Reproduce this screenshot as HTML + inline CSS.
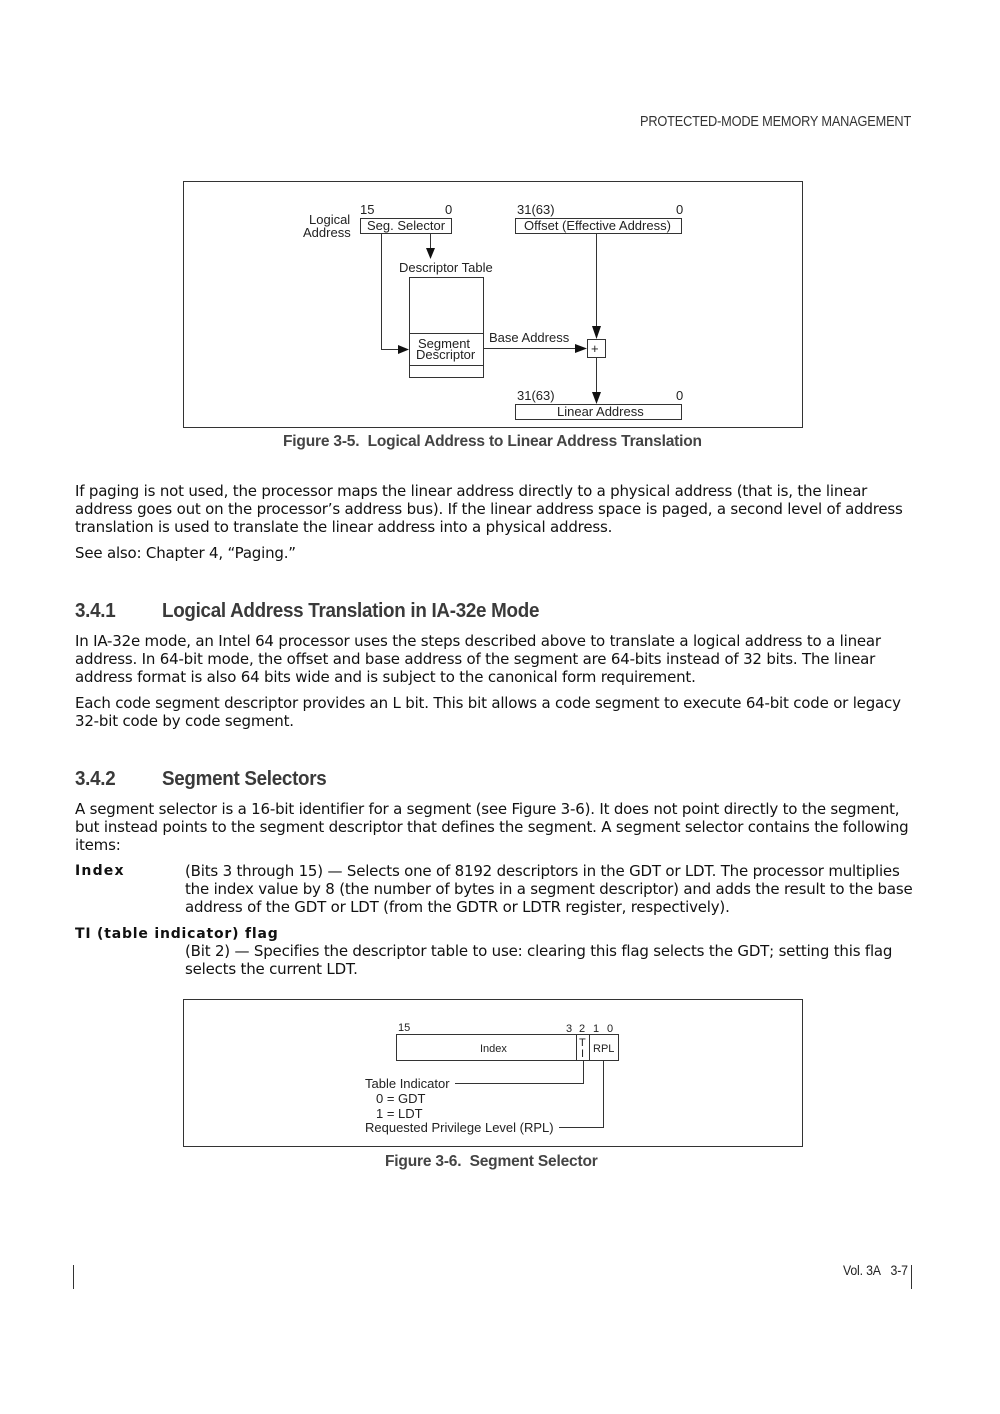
<!DOCTYPE html>
<html><head><meta charset="utf-8"><style>
html,body{margin:0;padding:0;background:#fff}
body{width:1000px;height:1414px;position:relative;overflow:hidden;color:#111}
.t{position:absolute;left:75px;font-family:"DejaVu Sans","Liberation Sans",sans-serif;font-size:15px;line-height:18px;white-space:nowrap;letter-spacing:-0.2px}
.h{position:absolute;font-family:"Liberation Sans",sans-serif;font-size:20px;font-weight:bold;color:#3a3a3a;white-space:nowrap;letter-spacing:-0.3px;transform:scaleX(0.94);transform-origin:0 0}
.cap{position:absolute;font-family:"Liberation Sans",sans-serif;font-size:16px;font-weight:bold;color:#444;white-space:nowrap;letter-spacing:-0.2px;transform:scaleX(0.97);transform-origin:0 0}
.b{font-weight:bold;letter-spacing:1.2px}
svg{position:absolute;left:0;top:0}
svg text{font-family:"Liberation Sans",sans-serif;fill:#222}
</style></head><body>
<div class="cap" style="left:640px;top:113px;font-size:15px;font-weight:normal;color:#333;transform:scaleX(0.85)">PROTECTED-MODE MEMORY MANAGEMENT</div>

<svg width="1000" height="1414" viewBox="0 0 1000 1414">
<g fill="none" stroke="#333" stroke-width="1">
<rect x="183.5" y="181.5" width="619" height="246"/>
<rect x="360.5" y="218.5" width="91" height="15"/>
<rect x="515.5" y="218.5" width="166" height="15"/>
<rect x="409.5" y="277.5" width="74" height="100"/>
<line x1="409" y1="333.5" x2="484" y2="333.5"/>
<line x1="409" y1="365.5" x2="484" y2="365.5"/>
<rect x="587.5" y="339.5" width="18" height="18"/>
<rect x="515.5" y="404.5" width="166" height="15"/>
<polyline points="381.5,234 381.5,349.5 398,349.5"/>
<line x1="430.5" y1="234" x2="430.5" y2="248"/>
<line x1="596.5" y1="234" x2="596.5" y2="326"/>
<line x1="484" y1="348.5" x2="576" y2="348.5"/>
<line x1="596.5" y1="358" x2="596.5" y2="392"/>
<rect x="183.5" y="999.5" width="619" height="147"/>
<rect x="396.5" y="1034.5" width="222" height="26"/>
<line x1="576.5" y1="1035" x2="576.5" y2="1061"/>
<line x1="589.5" y1="1035" x2="589.5" y2="1061"/>
<polyline points="455,1083.5 583.5,1083.5 583.5,1061"/>
<polyline points="559,1127.5 603.5,1127.5 603.5,1061"/>
<line x1="73.5" y1="1265" x2="73.5" y2="1289"/>
<line x1="911.5" y1="1265" x2="911.5" y2="1289"/>
</g>
<g fill="#111">
<polygon points="398,345 409,349.5 398,354"/>
<polygon points="426,248 435,248 430.5,259"/>
<polygon points="592,326 601,326 596.5,339"/>
<polygon points="575,344 587,348.5 575,353"/>
<polygon points="592,392 601,392 596.5,404"/>
</g>
<g font-size="13">
<text x="360" y="214">15</text><text x="445" y="214">0</text>
<text x="517" y="214">31(63)</text><text x="676" y="214">0</text>
<text x="309" y="224">Logical</text><text x="303" y="237">Address</text>
<text x="367" y="230">Seg. Selector</text>
<text x="524" y="230">Offset (Effective Address)</text>
<text x="399" y="272">Descriptor Table</text>
<text x="418" y="348">Segment</text><text x="416" y="359">Descriptor</text>
<text x="489" y="342">Base Address</text>
<text x="591" y="353">+</text>
<text x="517" y="400">31(63)</text><text x="676" y="400">0</text>
<text x="557" y="416">Linear Address</text>
</g>
<g font-size="11">
<text x="398" y="1031">15</text>
<text x="566" y="1032">3</text><text x="579" y="1032">2</text><text x="593" y="1032">1</text><text x="607" y="1032">0</text>
<text x="480" y="1052">Index</text>
<text x="579" y="1046">T</text><text x="581" y="1057">I</text>
<text x="593" y="1052">RPL</text>
</g>
<g font-size="13">
<text x="365" y="1088">Table Indicator</text>
<text x="376" y="1103">0 = GDT</text>
<text x="376" y="1118">1 = LDT</text>
<text x="365" y="1132">Requested Privilege Level (RPL)</text>
</g>
</svg>

<div class="cap" style="left:283px;top:433px">Figure 3-5.&nbsp; Logical Address to Linear Address Translation</div>

<div class="t" style="top:482px">If paging is not used, the processor maps the linear address directly to a physical address (that is, the linear<br>address goes out on the processor’s address bus). If the linear address space is paged, a second level of address<br>translation is used to translate the linear address into a physical address.</div>
<div class="t" style="top:544px">See also: Chapter 4, “Paging.”</div>

<div class="h" style="left:75px;top:600px">3.4.1</div><div class="h" style="left:162px;top:600px">Logical Address Translation in IA-32e Mode</div>
<div class="t" style="top:632px">In IA-32e mode, an Intel 64 processor uses the steps described above to translate a logical address to a linear<br>address. In 64-bit mode, the offset and base address of the segment are 64-bits instead of 32 bits. The linear<br>address format is also 64 bits wide and is subject to the canonical form requirement.</div>
<div class="t" style="top:694px">Each code segment descriptor provides an L bit. This bit allows a code segment to execute 64-bit code or legacy<br>32-bit code by code segment.</div>

<div class="h" style="left:75px;top:768px">3.4.2</div><div class="h" style="left:162px;top:768px">Segment Selectors</div>
<div class="t" style="top:800px">A segment selector is a 16-bit identifier for a segment (see Figure 3-6). It does not point directly to the segment,<br>but instead points to the segment descriptor that defines the segment. A segment selector contains the following<br>items:</div>
<div class="t b" style="top:862px;font-size:14px;letter-spacing:1.2px">Index</div>
<div class="t" style="left:185px;top:862px">(Bits 3 through 15) — Selects one of 8192 descriptors in the GDT or LDT. The processor multiplies<br>the index value by 8 (the number of bytes in a segment descriptor) and adds the result to the base<br>address of the GDT or LDT (from the GDTR or LDTR register, respectively).</div>
<div class="t b" style="top:925px;letter-spacing:0.8px;font-size:14px">TI (table indicator) flag</div>
<div class="t" style="left:185px;top:942px">(Bit 2) — Specifies the descriptor table to use: clearing this flag selects the GDT; setting this flag<br>selects the current LDT.</div>

<div class="cap" style="left:385px;top:1153px">Figure 3-6.&nbsp; Segment Selector</div>
<div class="cap" style="left:843px;top:1262px;font-size:14px;font-weight:normal;color:#222;transform:scaleX(0.88)">Vol. 3A&nbsp;&nbsp; 3-7</div>
</body></html>
